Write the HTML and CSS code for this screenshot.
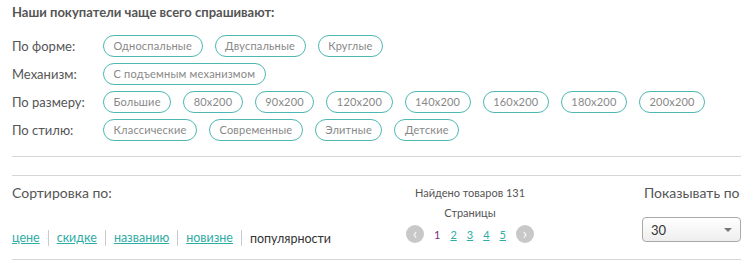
FILE: index.html
```html
<!DOCTYPE html>
<html lang="ru">
<head>
  <meta charset="UTF-8" />
  <title>Каталог</title>
  <link rel="stylesheet" href="styles.css">
</head>
<body>
  <div class="faq">
    <h3 class="faq-title">Наши покупатели чаще всего спрашивают:</h3>
    <div class="faq-row">
      <span class="faq-label">По форме:</span>
      <div class="tags">
        <a class="tag" href="#">Односпальные</a>
        <a class="tag" href="#">Двуспальные</a>
        <a class="tag" href="#">Круглые</a>
      </div>
    </div>
    <div class="faq-row">
      <span class="faq-label">Механизм:</span>
      <div class="tags">
        <a class="tag" href="#">С подъемным механизмом</a>
      </div>
    </div>
    <div class="faq-row">
      <span class="faq-label">По размеру:</span>
      <div class="tags">
        <a class="tag" href="#">Большие</a>
        <a class="tag" href="#">80x200</a>
        <a class="tag" href="#">90x200</a>
        <a class="tag" href="#">120x200</a>
        <a class="tag" href="#">140x200</a>
        <a class="tag" href="#">160x200</a>
        <a class="tag" href="#">180x200</a>
        <a class="tag" href="#">200x200</a>
      </div>
    </div>
    <div class="faq-row">
      <span class="faq-label">По стилю:</span>
      <div class="tags">
        <a class="tag" href="#">Классические</a>
        <a class="tag" href="#">Современные</a>
        <a class="tag" href="#">Элитные</a>
        <a class="tag" href="#">Детские</a>
      </div>
    </div>
  </div>

  <div class="toolbar">
    <div class="sort">
      <div class="sort-title">Сортировка по:</div>
      <div class="sort-links">
        <a href="#">цене</a>
        <a href="#">скидке</a>
        <a href="#">названию</a>
        <a href="#">новизне</a>
        <span class="current">популярности</span>
      </div>
    </div>
    <div class="pager">
      <div class="found">Найдено товаров 131</div>
      <div class="pages-title">Страницы</div>
      <div class="pages">
        <span class="arrow">&#8249;</span>
        <span class="page current">1</span>
        <a class="page" href="#">2</a>
        <a class="page" href="#">3</a>
        <a class="page" href="#">4</a>
        <a class="page" href="#">5</a>
        <span class="arrow">&#8250;</span>
      </div>
    </div>
    <div class="per-page">
      <div class="per-title">Показывать по</div>
      <div class="select">
        <span>30</span>
        <span class="caret"></span>
      </div>
    </div>
  </div>
</body>
</html>
```

FILE: styles.css
```css
body {
  margin: 0;
  padding: 0 9px 0 12px;
  font-family: Lato, 'Open Sans', sans-serif;
  color: #555;
  background: #fff;
  overflow: hidden;
}

.faq {
  padding-top: 4px;
  padding-bottom: 12px;
  border-bottom: 1px solid #d6d6d6;
}

.faq-title {
  margin: 0 0 12px;
  font-size: 13px;
  font-weight: bold;
  color: #555;
}

.faq-row {
  display: flex;
  align-items: center;
  height: 28px;
}

.faq-label {
  flex: 0 0 91px;
  font-size: 13px;
  color: #555;
  white-space: nowrap;
}

.tags {
  display: flex;
  gap: 12px;
}

.tag {
  display: inline-block;
  height: 20px;
  line-height: 20px;
  padding: 0 9.5px;
  border: 1.5px solid #4fb8b2;
  border-radius: 11px;
  font-size: 11px;
  letter-spacing: 0.2px;
  color: #888;
  text-decoration: none;
}

.toolbar {
  display: flex;
  margin-top: 18px;
  border-top: 1px solid #d6d6d6;
  border-bottom: 1px solid #d6d6d6;
  height: 83px;
}

.sort {
  flex: 0 0 290px;
  min-width: 0;
  white-space: nowrap;
}

.sort-title {
  margin-top: 8px;
  font-size: 14px;
  color: #555;
}

.sort-links {
  margin-top: 29px;
  display: flex;
  align-items: center;
  font-size: 12.5px;
}

.sort-links a {
  color: #2fada5;
  text-decoration: underline;
  padding-right: 8px;
  margin-right: 8px;
  border-right: 1px solid #ccc;
  line-height: 16px;
}

.sort-links .current {
  color: #333;
}

.pager {
  flex: 0 0 336px;
  text-align: center;
  font-size: 11px;
  color: #555;
}

.found {
  margin-top: 10px;
}

.pages-title {
  margin-top: 7px;
}

.pages {
  display: flex;
  align-items: center;
  justify-content: center;
  gap: 10px;
  margin-top: 6px;
}

.page {
  font-size: 11px;
  color: #2fada5;
}

.page.current {
  color: #7b2d85;
}

.arrow {
  width: 18px;
  height: 18px;
  border-radius: 50%;
  background: #c8c8c8;
  color: #fff;
  font-size: 15px;
  line-height: 16px;
  text-align: center;
}

.per-page {
  flex: 1;
  min-width: 0;
  padding-left: 4px;
  white-space: nowrap;
  overflow: hidden;
}

.per-title {
  margin-top: 8px;
  padding-left: 2px;
  font-size: 14px;
  color: #555;
}

.select {
  display: flex;
  align-items: center;
  justify-content: space-between;
  margin-top: 16px;
  height: 23px;
  padding: 0 8px;
  border: 1px solid #aaa;
  border-radius: 4px;
  background: linear-gradient(#fff, #eee);
  font-size: 13px;
  color: #333;
}

.caret {
  border-left: 4px solid transparent;
  border-right: 4px solid transparent;
  border-top: 4px solid #777;
}
```
